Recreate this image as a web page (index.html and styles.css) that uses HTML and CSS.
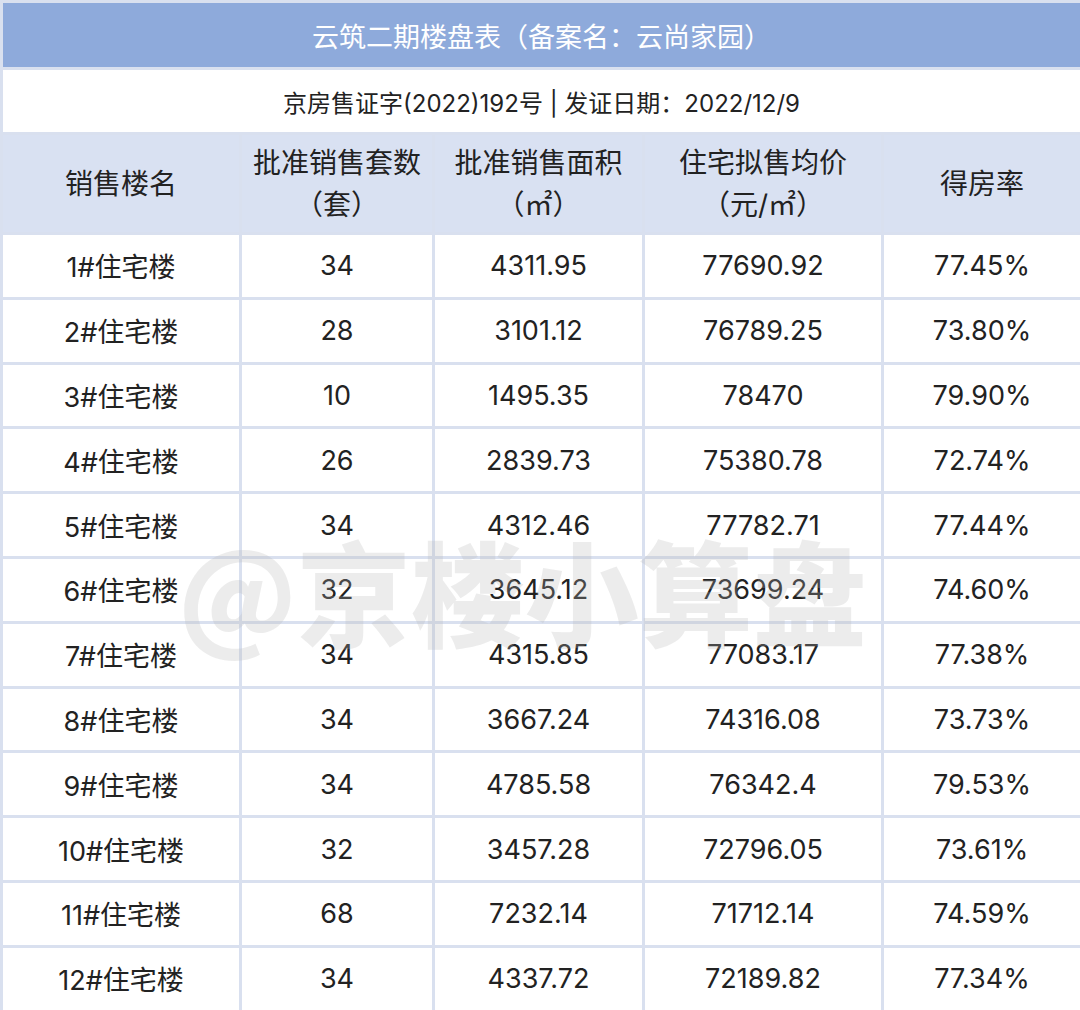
FILE: index.html
```html
<!DOCTYPE html>
<html lang="zh-CN">
<head>
<meta charset="utf-8">
<title>云筑二期楼盘表</title>
<link rel="stylesheet" href="styles.css">
</head>
<body>
<div class="sheet">
<table class="tbl">
  <colgroup>
    <col class="c1"><col class="c2"><col class="c3"><col class="c4"><col class="c5">
  </colgroup>
  <tr class="title-row"><td colspan="5">云筑二期楼盘表（备案名：云尚家园）</td></tr>
  <tr class="sub-row"><td colspan="5">京房售证字(2022)192号 | 发证日期：2022/12/9</td></tr>
  <tr class="head-row">
    <td>销售楼名</td>
    <td>批准销售套数<br>（套）</td>
    <td>批准销售面积<br>（㎡）</td>
    <td>住宅拟售均价<br>（元/㎡）</td>
    <td>得房率</td>
  </tr>
  <tr><td>1#住宅楼</td><td>34</td><td>4311.95</td><td>77690.92</td><td>77.45%</td></tr>
  <tr><td>2#住宅楼</td><td>28</td><td>3101.12</td><td>76789.25</td><td>73.80%</td></tr>
  <tr><td>3#住宅楼</td><td>10</td><td>1495.35</td><td>78470</td><td>79.90%</td></tr>
  <tr><td>4#住宅楼</td><td>26</td><td>2839.73</td><td>75380.78</td><td>72.74%</td></tr>
  <tr><td>5#住宅楼</td><td>34</td><td>4312.46</td><td>77782.71</td><td>77.44%</td></tr>
  <tr><td>6#住宅楼</td><td>32</td><td>3645.12</td><td>73699.24</td><td>74.60%</td></tr>
  <tr><td>7#住宅楼</td><td>34</td><td>4315.85</td><td>77083.17</td><td>77.38%</td></tr>
  <tr><td>8#住宅楼</td><td>34</td><td>3667.24</td><td>74316.08</td><td>73.73%</td></tr>
  <tr><td>9#住宅楼</td><td>34</td><td>4785.58</td><td>76342.4</td><td>79.53%</td></tr>
  <tr><td>10#住宅楼</td><td>32</td><td>3457.28</td><td>72796.05</td><td>73.61%</td></tr>
  <tr><td>11#住宅楼</td><td>68</td><td>7232.14</td><td>71712.14</td><td>74.59%</td></tr>
  <tr><td>12#住宅楼</td><td>34</td><td>4337.72</td><td>72189.82</td><td>77.34%</td></tr>
</table>
<div class="watermark">@京楼小算盘</div>
</div>
</body>
</html>
```

FILE: styles.css
```css
html, body {
  margin: 0;
  padding: 0;
  background: #ffffff;
}
.sheet {
  position: relative;
  width: 1080px;
  height: 1010px;
  overflow: hidden;
}
.tbl {
  width: 1080px;
  table-layout: fixed;
  border-collapse: collapse;
  font-family: "Inter", "Noto Sans CJK SC", sans-serif;
  color: #222222;
  font-size: 27px;
}
.c1 { width: 239px; }
.c2 { width: 193px; }
.c3 { width: 210px; }
.c4 { width: 239px; }
.c5 { width: 199px; }
.tbl td {
  border: 3px solid #d9e0ef;
  text-align: center;
  vertical-align: middle;
  padding: 0;
  height: 64.8px;
  box-sizing: border-box;
}
.title-row td {
  height: 67px;
  background: #8eaadb;
  color: #ffffff;
  font-size: 27px;
}
.sub-row td {
  height: 65px;
  font-size: 24px;
  color: #222222;
}
.head-row td {
  height: 100px;
  background: #d9e1f2;
  line-height: 42px;
  font-size: 28px;
}
.watermark {
  position: absolute;
  left: 178px;
  top: 524px;
  font-family: "Noto Sans CJK SC", sans-serif;
  font-weight: 900;
  font-size: 114px;
  line-height: 130px;
  color: rgba(180, 180, 180, 0.26);
  white-space: nowrap;
  pointer-events: none;
}
```
